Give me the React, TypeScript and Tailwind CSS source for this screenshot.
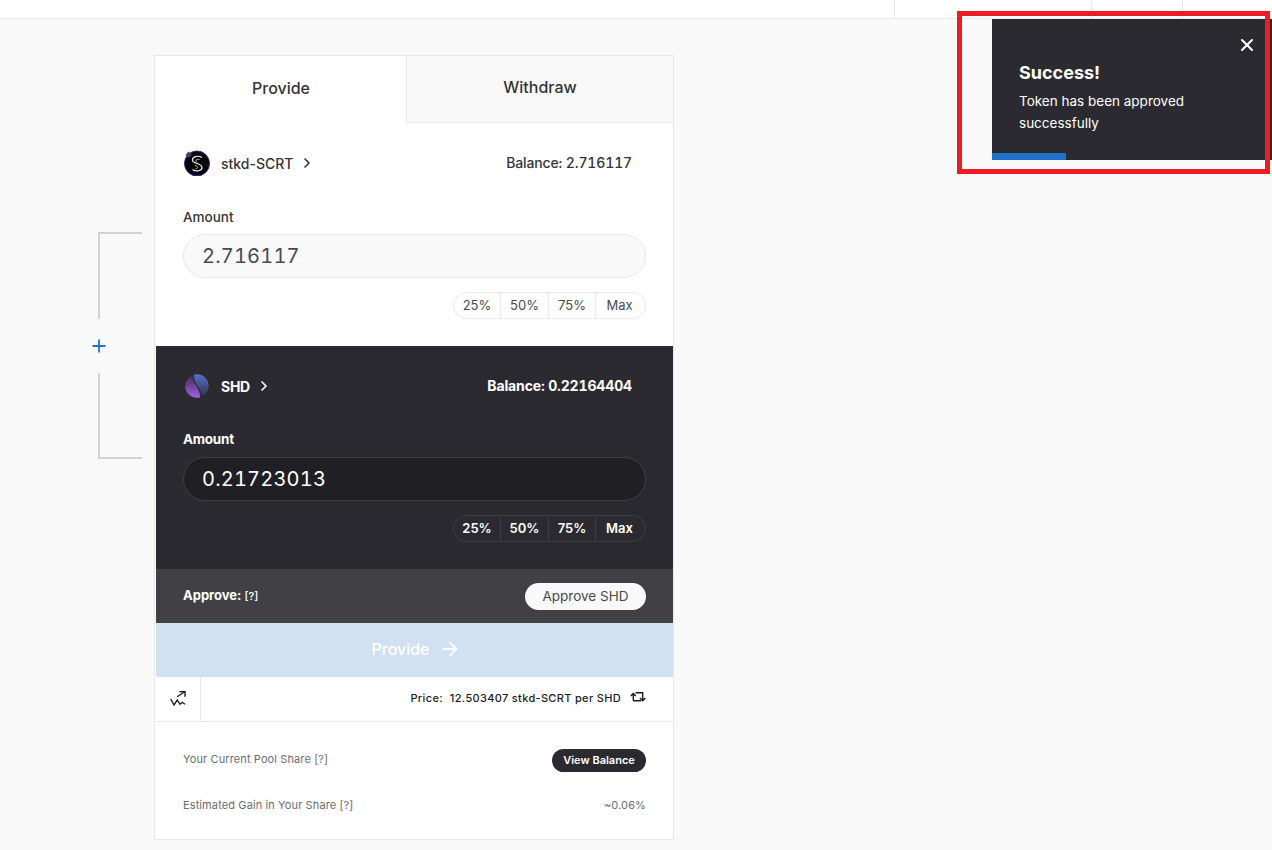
import { ArrowRight, ChevronRight, X } from "lucide-react"

const sans = "font-['Inter','Liberation_Sans',sans-serif]"

function ScrtLogo() {
  return (
    <svg width="26" height="26" viewBox="0 0 26 26" className="shrink-0">
      <circle cx="13" cy="13.5" r="12.5" fill="#050508" stroke="#35208f" strokeWidth="1" />
      <path d="M1.5 5 L4.5 1.5 L8 4.5 L5 8 Z" fill="#43405a" />
      <path
        d="M18 7.5 C14 5 8 6.5 8.5 10.5 C9 14 18 13 18 17.5 C18 21 12 22 8.5 19.5"
        fill="none"
        stroke="#f2f2f2"
        strokeWidth="1.2"
      />
      <path d="M15.5 9.5 C12.5 8.5 10.8 10.5 12.8 12.4 M11 15.5 C14 16 14.5 18.5 11.5 18.8" fill="none" stroke="#d0d0d0" strokeWidth="0.9" />
    </svg>
  )
}

function ShdLogo() {
  return (
    <svg width="26" height="26" viewBox="0 0 26 26" className="shrink-0">
      <defs>
        <linearGradient id="shdTop" x1="0" y1="0" x2="0" y2="1">
          <stop offset="0" stopColor="#5a6fc4" />
          <stop offset="1" stopColor="#2c3150" />
        </linearGradient>
        <linearGradient id="shdBottom" x1="0" y1="0" x2="0" y2="1">
          <stop offset="0" stopColor="#3d2c55" />
          <stop offset="1" stopColor="#a45fe0" />
        </linearGradient>
      </defs>
      <path d="M10 1.5 C18 -0.5 26 6 24.5 14.5 C23.5 20 20 23 16 24 C21 17 9 13 10 1.5 Z" fill="url(#shdTop)" />
      <path d="M16 24.5 C8 26.5 0 20 1.5 11.5 C2.5 6 6 3 10 2 C5 9 17 13 16 24.5 Z" fill="url(#shdBottom)" />
    </svg>
  )
}

function TrendIcon() {
  return (
    <svg width="16" height="16" viewBox="0 0 16 16" fill="none" stroke="#1b1b20" strokeWidth="1.4">
      <path d="M0.7 8 L4 14 L7.3 9 L10 13.3 L12.3 11.3 L15 13.3" />
      <path d="M7.3 5.7 L14.5 0.7 M9.3 0.6 H15 V5.7" />
    </svg>
  )
}

function SwapIcon() {
  return (
    <svg width="16" height="14" viewBox="0 0 16 14" fill="none" stroke="#1b1b20" strokeWidth="1.4">
      <path d="M3.3 9.7 V2.5 M0.8 5 L3.3 2.4 L5.8 5 M5.5 1.8 H12.7 V9 M10 7 L12.7 9.7 L15.3 7 M3.3 9.7 H11" />
    </svg>
  )
}

function PercentButtons({ dark }: { dark?: boolean }) {
  const labels = ["25%", "50%", "75%", "Max"]
  const widths = ["w-[46px]", "w-[48px]", "w-[47px]", "w-[50px] pr-[2px]"]
  return (
    <div className="flex justify-end mt-[14px]">
      <div
        className={
          dark
            ? "flex h-[27px] rounded-full border border-[#3e3d43] text-[13px] leading-[25px] text-white font-semibold"
            : "flex h-[27px] rounded-full border border-[#e8e8e8] text-[13px] leading-[25px] text-[#4a4a4f]"
        }
      >
        {labels.map((label, i) => (
          <div
            key={label}
            className={`${widths[i]} text-center ${i > 0 ? (dark ? "border-l border-[#3e3d43]" : "border-l border-[#e8e8e8]") : ""}`}
          >
            {label}
          </div>
        ))}
      </div>
    </div>
  )
}

export default function App() {
  return (
    <div className={`relative h-[850px] w-[1272px] overflow-hidden bg-[#f9f9f9] ${sans}`}>
      {/* Top bar */}
      <div className="flex h-[19px] justify-end border-b border-[#e8e8e8] bg-white">
        <div className="w-[197px] border-l border-[#e8e8e8]" />
        <div className="w-[91px] border-l border-[#e8e8e8]" />
        <div className="w-[90px] border-l border-[#e8e8e8]" />
      </div>

      <div className="flex pl-[98px] pt-[36px]">
        {/* Bracket */}
        <div className="flex w-[56px] flex-col pt-[177px]">
          <div className="h-[87px] w-[44px] border-l-2 border-t-2 border-[#d2d2d2]" />
          <div className="-ml-[6px] flex h-[54px] w-[14px] items-center justify-center text-[#2271c9]">
            <svg width="14" height="14" viewBox="0 0 14 14" stroke="currentColor" strokeWidth="1.8">
              <path d="M7 0.5 V13.5 M0.5 7 H13.5" />
            </svg>
          </div>
          <div className="h-[86px] w-[44px] border-b-2 border-l-2 border-[#d2d2d2]" />
        </div>

        {/* Card */}
        <div className="h-[785px] w-[520px] border border-[#e8e8e8] bg-white pl-px">
          <div className="flex h-[67px]">
            <div className="w-[250px] pt-[22px] text-center text-[16px] font-medium leading-[20px] text-[#333338]">
              Provide
            </div>
            <div className="flex-1 border-b border-l border-[#e8e8e8] bg-[#f9f9f9] pt-[21px] text-center text-[16px] font-medium leading-[20px] text-[#333338]">
              Withdraw
            </div>
          </div>

          {/* stkd-SCRT */}
          <div className="h-[223px] pl-[27px] pr-[27px] pt-[27px]">
            <div className="flex h-[26px] items-center justify-between pr-[14px]">
              <div className="flex items-center pl-[1px]">
                <ScrtLogo />
                <span className="ml-[11px] text-[14px] font-medium text-[#333338]">stkd-SCRT</span>
                <ChevronRight size={16} strokeWidth={2.5} className="ml-[6px] text-[#333338]" />
              </div>
              <span className="-mt-[2px] text-[14px] font-medium tracking-[-0.01em] tabular-nums text-[#333338]">Balance: 2.716117</span>
            </div>
            <div className="mt-[31px] text-[13.5px] font-medium leading-[20px] text-[#333338]">Amount</div>
            <div className="mt-[7px] h-[44px] rounded-full border border-[#e8e8e8] bg-[#f9f9f9] pl-[18px] text-[20px] leading-[42px] tabular-nums tracking-[0.01em] text-[#4a4a4f]">
              2.716117
            </div>
            <PercentButtons />
          </div>

          {/* SHD */}
          <div className="h-[223px] bg-[#2b2a30] pl-[27px] pr-[27px] pt-[27px]">
            <div className="flex h-[26px] items-center justify-between pr-[14px]">
              <div className="flex items-center pl-[1px]">
                <ShdLogo />
                <span className="ml-[11px] text-[14px] font-bold tracking-[-0.02em] text-white">SHD</span>
                <ChevronRight size={16} strokeWidth={2.5} className="ml-[6px] text-white" />
              </div>
              <span className="-mt-[2px] text-[14px] font-bold tracking-[-0.01em] tabular-nums text-white">Balance: 0.22164404</span>
            </div>
            <div className="mt-[30px] text-[13.5px] font-bold leading-[20px] tracking-[-0.02em] text-white">Amount</div>
            <div className="mt-[8px] h-[44px] rounded-full border border-[#3e3d43] bg-[#201f24] pl-[18px] text-[20px] leading-[42px] tabular-nums tracking-[0.01em] text-white">
              0.21723013
            </div>
            <PercentButtons dark />
          </div>

          {/* Approve */}
          <div className="flex h-[54px] items-center justify-between bg-[#414045] pl-[27px] pr-[27px]">
            <div className="flex items-center text-white">
              <span className="text-[13px] font-bold">Approve:</span>
              <span className="ml-[3px] text-[11px] font-medium">[?]</span>
            </div>
            <div className="flex h-[27px] w-[121px] items-center justify-center rounded-full bg-[#f9f9f9] text-[13.5px] text-[#4a4a4f]">
              Approve SHD
            </div>
          </div>

          {/* Provide */}
          <div className="flex h-[54px] items-center justify-center gap-[9px] bg-[#d0e1f4] pb-[2px] pl-[3px] text-[16px] font-medium text-white">
            Provide
            <ArrowRight size={22} strokeWidth={2} />
          </div>

          {/* Price */}
          <div className="flex h-[45px] border-b border-[#e8e8e8]">
            <div className="flex w-[45px] items-center justify-center border-r border-[#e8e8e8]">
              <TrendIcon />
            </div>
            <div className="flex flex-1 items-center justify-end pb-[2px] pr-[27px] text-[11px] font-medium tracking-[0.03em] text-[#1b1b20]">
              <span>Price:</span>
              <span className="ml-[7px]">12.503407 stkd-SCRT per SHD</span>
              <span className="ml-[9px]">
                <SwapIcon />
              </span>
            </div>
          </div>

          {/* Footer */}
          <div className="pl-[27px] pr-[27px] text-[11px] tracking-[0.01em] text-[#6b6b70]">
            <div className="mt-[27px] flex h-[23px] items-center justify-between">
              <span className="-mt-[2px]">Your Current Pool Share [?]</span>
              <div className="flex h-[23px] w-[94px] items-center justify-center rounded-full bg-[#2b2a30] font-semibold tracking-normal text-white">
                View Balance
              </div>
            </div>
            <div className="mt-[22px] flex h-[23px] items-center justify-between">
              <span>Estimated Gain in Your Share [?]</span>
              <span>~0.06%</span>
            </div>
          </div>
        </div>
      </div>

      {/* Toast */}
      <div className="absolute left-[992px] top-[19px] h-[141px] w-[280px] bg-[#2b2a30] text-white">
        <X size={20} strokeWidth={2.5} className="absolute right-[15px] top-[16px]" />
        <div className="pl-[27px] pt-[42px]">
          <div className="text-[18px] font-bold leading-[24px]">Success!</div>
          <div className="mt-[5px] w-[190px] text-[13.5px] leading-[22px]">Token has been approved successfully</div>
        </div>
        <div className="absolute bottom-0 left-0 h-[7px] w-[74px] bg-[#2271c9]" />
      </div>

      {/* Red annotation frame */}
      <div className="absolute left-[957px] top-[11px] h-[163px] w-[313px] border-[5px] border-[#ed1c24]" />
    </div>
  )
}
